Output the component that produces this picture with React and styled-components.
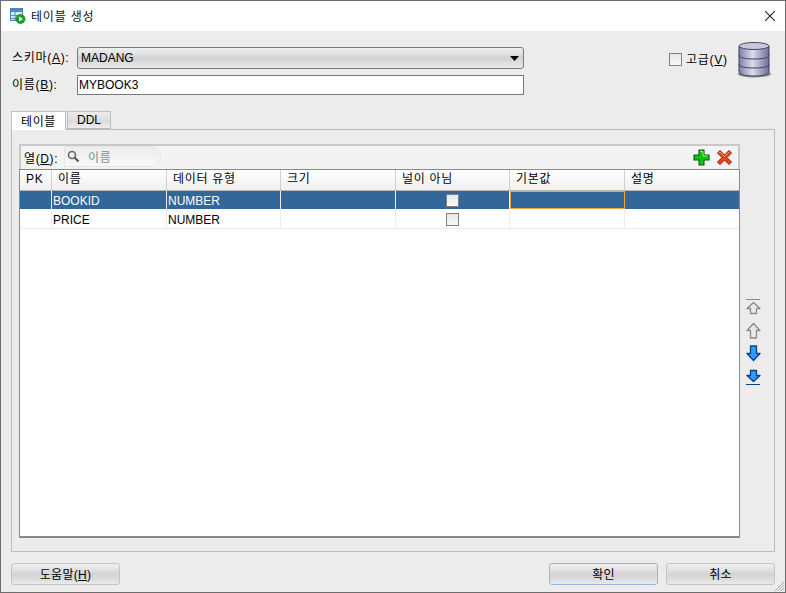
import styled, { createGlobalStyle } from 'styled-components';

const GlobalStyle = createGlobalStyle`
  html, body {
    margin: 0;
    padding: 0;
    background: #ececec;
  }
  * {
    box-sizing: border-box;
  }
`;

const columns = [
  { name: 'PK', width: 32 },
  { name: '이름', width: 115 },
  { name: '데이터 유형', width: 114 },
  { name: '크기', width: 115 },
  { name: '널이 아님', width: 114 },
  { name: '기본값', width: 115 },
  { name: '설명', width: 114 },
];

const rows = [
  { name: 'BOOKID', type: 'NUMBER', selected: true },
  { name: 'PRICE', type: 'NUMBER', selected: false },
];

const App = () => {
  return (
    <>
      <GlobalStyle />
      <Window>
        <TitleBar>
          <TitleIcon />
          <Title>테이블 생성</Title>
          <CloseIcon />
        </TitleBar>

        <Body>
          <Header>
            <Fields>
              <FieldRow>
                <FieldLabel>스키마(<u>A</u>):</FieldLabel>
                <Combo>
                  MADANG
                  <ComboArrow />
                </Combo>
              </FieldRow>
              <FieldRow $tight>
                <FieldLabel>이름(<u>B</u>):</FieldLabel>
                <TextInput>MYBOOK3</TextInput>
              </FieldRow>
            </Fields>
            <Advanced>
              <CheckBox />
              <AdvancedLabel>고급(<u>V</u>)</AdvancedLabel>
            </Advanced>
            <DatabaseIcon />
          </Header>

          <Tabs>
            <Tab $active>테이블</Tab>
            <Tab>DDL</Tab>
          </Tabs>

          <TabPanel>
            <PanelRow>
              <TableBox>
                <Toolbar>
                  <ToolbarLabel>열(<u>D</u>):</ToolbarLabel>
                  <SearchBox>
                    <SearchIcon />
                    <SearchText>이름</SearchText>
                  </SearchBox>
                  <ToolbarIcons>
                    <PlusIcon />
                    <CrossIcon />
                  </ToolbarIcons>
                </Toolbar>
                <Grid>
                  <HeaderRow>
                    {columns.map((col) => (
                      <HeaderCell key={col.name} $width={col.width}>{col.name}</HeaderCell>
                    ))}
                  </HeaderRow>
                  {rows.map((row) => (
                    <DataRow key={row.name} $selected={row.selected}>
                      <Cell $width={32} />
                      <Cell $width={115}>{row.name}</Cell>
                      <Cell $width={114}>{row.type}</Cell>
                      <Cell $width={115} />
                      <Cell $width={114} $center><SmallCheck /></Cell>
                      <Cell $width={115} $focused={row.selected} />
                      <Cell $width={114} />
                    </DataRow>
                  ))}
                </Grid>
              </TableBox>
              <MoveButtons>
                <MoveIcon $kind="gray" $bar="top" />
                <MoveIcon $kind="gray" />
                <MoveIcon $kind="blue" $down />
                <MoveIcon $kind="blue" $down $bar="bottom" />
              </MoveButtons>
            </PanelRow>
          </TabPanel>

          <Footer>
            <Button>도움말(<u>H</u>)</Button>
            <FooterRight>
              <Button $default>확인</Button>
              <Button>취소</Button>
            </FooterRight>
          </Footer>
        </Body>
        <ResizeGrip />
      </Window>
    </>
  );
};

// Icons
const TitleIcon = () => (
  <svg width="16" height="16" viewBox="0 0 16 16">
    <rect x="0.5" y="0.5" width="12" height="12" fill="#dfe9f5" stroke="#4f7fb5" />
    <rect x="1" y="1" width="11" height="3" fill="#4f86c6" />
    <path d="M1 7.5H12M1 10.5H12M5 4V12" stroke="#5f8dc0" />
    <circle cx="10.5" cy="11" r="4.6" fill="#1f9e2c" stroke="#0d7a1c" strokeWidth="0.6" />
    <path d="M9 8.4L13 11L9 13.6Z" fill="#fff" />
  </svg>
);

const CloseIcon = () => (
  <svg width="10" height="10" viewBox="0 0 10 10">
    <path d="M0 0L10 10M10 0L0 10" stroke="#222" strokeWidth="1.05" />
  </svg>
);

const ComboArrow = () => (
  <svg width="9" height="5" viewBox="0 0 9 5">
    <path d="M0 0H9L4.5 5Z" fill="#000" />
  </svg>
);

const DatabaseIcon = () => (
  <DbSvg width="36" height="38" viewBox="0 0 36 38">
    <defs>
      <linearGradient id="dbBody" x1="0" x2="1" y1="0" y2="0">
        <stop offset="0" stopColor="#7d7fa6" />
        <stop offset="0.45" stopColor="#dcdcec" />
        <stop offset="1" stopColor="#6d6f98" />
      </linearGradient>
    </defs>
    <ellipse cx="17.5" cy="33" rx="16.5" ry="3.5" fill="#8a8a8a" />
    <path d="M2 5V31C2 33.5 9 35 17 35S32 33.5 32 31V5Z" fill="url(#dbBody)" stroke="#3f4160" />
    <ellipse cx="17" cy="5" rx="15" ry="3.5" fill="#c7c8dc" stroke="#44466a" />
    <path d="M2 14C2 17 9 18 17 18S32 17 32 14M2 23C2 26 9 27 17 27S32 26 32 23" fill="none" stroke="#3f4160" />
  </DbSvg>
);

const SearchIcon = () => (
  <svg width="13" height="13" viewBox="0 0 13 13">
    <circle cx="5" cy="5" r="3.5" fill="none" stroke="#666" strokeWidth="1.6" />
    <path d="M7.8 7.8L11.5 11.5" stroke="#555" strokeWidth="2.2" />
  </svg>
);

const PlusIcon = () => (
  <svg width="17" height="17" viewBox="0 0 17 17">
    <path d="M6 1H11V6H16V11H11V16H6V11H1V6H6Z" fill="#12c212" stroke="#0a5c0a" strokeWidth="1.1" />
    <path d="M7 2.5H10V7H14.5" fill="none" stroke="#8cf08c" strokeWidth="1" />
  </svg>
);

const CrossIcon = () => (
  <svg width="17" height="17" viewBox="0 0 17 17">
    <path d="M1.5 4L4 1.5L8.5 6L13 1.5L15.5 4L11 8.5L15.5 13L13 15.5L8.5 11L4 15.5L1.5 13L6 8.5Z" fill="#f0401c" stroke="#8c1c08" strokeWidth="1" />
    <path d="M3 4L4 3L8.5 7.5L13 3" fill="none" stroke="#ffa080" strokeWidth="0.9" />
  </svg>
);

const MoveIcon = ({ $kind, $down, $bar }) => {
  const blue = $kind === 'blue';
  const fill = blue ? '#2f9bff' : '#e8e8e8';
  const stroke = blue ? '#0b3f8c' : '#8c8c8c';
  const arrow = $bar
    ? 'M7.5 3.5L14 9.5H10.5V14.5H4.5V9.5H1Z'
    : 'M7.5 1.5L14 8.5H10.5V16H4.5V8.5H1Z';
  return (
    <svg width="16" height="18" viewBox="0 0 16 18">
      {$bar === 'top' && <path d="M0 0.5H14" stroke={stroke} />}
      {$bar === 'bottom' && <path d="M0 17.5H14" stroke={stroke} />}
      <path
        d={arrow}
        fill={fill}
        stroke={stroke}
        strokeWidth="1.3"
        strokeLinejoin="round"
        transform={$down ? 'matrix(1 0 0 -1 0 18)' : undefined}
      />
    </svg>
  );
};

const ResizeGrip = () => (
  <GripSvg width="12" height="12" viewBox="0 0 12 12">
    <path d="M11 2L2 11M11 5L5 11M11 8L8 11" stroke="#a8a8a8" />
  </GripSvg>
);

// Styled Components
const Window = styled.div`
  position: relative;
  width: 786px;
  height: 593px;
  display: flex;
  flex-direction: column;
  border: 1px solid #6e6e6e;
  background: #ececec;
  color: #000;
  font-family: 'Liberation Sans', 'Noto Sans CJK KR', sans-serif;
  font-size: 12px;
  overflow: hidden;
`;

const TitleBar = styled.div`
  height: 30px;
  flex-shrink: 0;
  display: flex;
  align-items: center;
  padding: 0 10px 0 9px;
  background: #fff;
`;

const Title = styled.span`
  margin: 0 0 2px 5px;
  flex: 1;
  color: #111;
  letter-spacing: 0.8px;
`;

const Body = styled.div`
  flex: 1;
  display: flex;
  flex-direction: column;
  padding: 16px 10px 8px 10px;
`;

const Header = styled.div`
  display: flex;
  align-items: flex-start;
  height: 48px;
`;

const Fields = styled.div`
  width: 513px;
  display: flex;
  flex-direction: column;
`;

const FieldRow = styled.div`
  display: flex;
  align-items: center;
  margin-top: ${(p) => (p.$tight ? '6px' : '0')};
`;

const FieldLabel = styled.label`
  width: 66px;
  flex-shrink: 0;
  padding: 0 0 3px 1px;
  letter-spacing: 0.7px;
`;

const Combo = styled.div`
  flex: 1;
  height: 22px;
  display: flex;
  align-items: center;
  justify-content: space-between;
  padding: 0 4px 0 3px;
  border: 1px solid #7a7a7a;
  border-radius: 3px;
  background: linear-gradient(#f0f0f0 0%, #e4e4e4 25%, #d2d2d2 50%, #e0e0e0 80%, #ececec 100%);
`;

const TextInput = styled.div`
  flex: 1;
  height: 20px;
  display: flex;
  align-items: center;
  padding: 0 1px;
  border: 1px solid #7a7a7a;
  background: #fff;
`;

const Advanced = styled.div`
  margin-left: 145px;
  margin-top: 3px;
  display: flex;
  align-items: center;
  gap: 4px;
`;

const AdvancedLabel = styled.span`
  padding-bottom: 2px;
  letter-spacing: 0.7px;
`;

const CheckBox = styled.span`
  width: 13px;
  height: 13px;
  border: 1px solid #808080;
  background: linear-gradient(#e8e8e8, #f8f8f8);
`;

const DbSvg = styled.svg`
  margin-left: 9px;
  margin-top: -6px;
  flex-shrink: 0;
`;

const Tabs = styled.div`
  display: flex;
  margin-top: 16px;
  position: relative;
  z-index: 1;
`;

const Tab = styled.div`
  height: ${(p) => (p.$active ? '19px' : '18px')};
  width: ${(p) => (p.$active ? '55px' : '44px')};
  margin-bottom: ${(p) => (p.$active ? '-1px' : '0')};
  margin-left: ${(p) => (p.$active ? '0' : '1px')};
  padding-bottom: ${(p) => (p.$active ? '2px' : '0')};
  display: flex;
  align-items: center;
  justify-content: center;
  letter-spacing: ${(p) => (p.$active ? '0.6px' : '0')};
  border: 1px solid #c0c0c0;
  border-bottom: ${(p) => (p.$active ? 'none' : '1px solid #b8b8b8')};
  background: ${(p) => (p.$active ? '#fff' : 'linear-gradient(#ececec, #dcdcdc 60%, #ececec)')};
`;

const TabPanel = styled.div`
  height: 423px;
  padding: 14px 12px 13px 7px;
  border: 1px solid #bcbcbc;
  background: #ececec;
`;

const PanelRow = styled.div`
  height: 100%;
  display: flex;
`;

const TableBox = styled.div`
  width: 721px;
  display: flex;
  flex-direction: column;
  flex-shrink: 0;
`;

const Toolbar = styled.div`
  height: 25px;
  display: flex;
  align-items: center;
  padding: 0 5px 0 3px;
  border: 2px solid #c8c8c8;
  border-bottom: none;
  background: #f3f3f3;
`;

const ToolbarLabel = styled.span`
  flex-shrink: 0;
  letter-spacing: 0.6px;
`;

const SearchBox = styled.div`
  width: 97px;
  height: 21px;
  margin: -2px 0 0 6px;
  display: flex;
  align-items: center;
  gap: 8px;
  padding-left: 2px;
  border-radius: 0 10px 10px 0;
  background: linear-gradient(#ececec, #f8f8f8);
  border: 1px solid #e6e6e6;
`;

const SearchText = styled.span`
  color: #8a8a8a;
  letter-spacing: 0.7px;
`;

const ToolbarIcons = styled.div`
  margin-left: auto;
  display: flex;
  gap: 6px;
`;

const Grid = styled.div`
  flex: 1;
  border: 2px solid #8a8a8a;
  border-top-width: 1px;
  border-left-width: 1px;
  border-right-width: 1px;
  background: #fff;
`;

const HeaderRow = styled.div`
  height: 21px;
  display: flex;
  border-bottom: 1px solid #b8b8b8;
  background: linear-gradient(#ffffff, #f0f0f0);
`;

const HeaderCell = styled.div`
  width: ${(p) => p.$width}px;
  flex-shrink: 0;
  padding-left: 6px;
  line-height: 19px;
  letter-spacing: 0.7px;
  border-right: 1px solid #cfcfcf;
  &:last-child {
    border-right: none;
  }
`;

const DataRow = styled.div`
  height: 19px;
  display: flex;
  background: ${(p) => (p.$selected ? '#336699' : '#fff')};
  color: ${(p) => (p.$selected ? '#fff' : '#000')};
  border-bottom: 1px solid ${(p) => (p.$selected ? '#fff' : '#ececec')};
`;

const Cell = styled.div`
  width: ${(p) => p.$width}px;
  flex-shrink: 0;
  display: flex;
  align-items: center;
  justify-content: ${(p) => (p.$center ? 'center' : 'flex-start')};
  padding: ${(p) => (p.$center ? '0' : '1px 0 0 1px')};
  border-right: 1px solid #ececec;
  ${(p) => p.$focused && 'border: 1px solid #f0a830;'}
  &:last-child {
    border-right: none;
  }
`;

const SmallCheck = styled.span`
  width: 13px;
  height: 13px;
  border: 1px solid #808080;
  background: linear-gradient(#e8e8e8, #f8f8f8);
`;

const MoveButtons = styled.div`
  margin-left: 6px;
  margin-top: 155px;
  display: flex;
  flex-direction: column;
  gap: 4.5px;
`;

const Footer = styled.div`
  margin-top: 11px;
  display: flex;
  justify-content: space-between;
`;

const FooterRight = styled.div`
  display: flex;
  gap: 8px;
`;

const Button = styled.button`
  width: 109px;
  height: 22px;
  padding: 0 0 2px;
  color: #000;
  font: inherit;
  letter-spacing: 0.3px;
  border: 1px solid ${(p) => (p.$default ? '#8fb8e0' : '#c4c4c4')};
  border-radius: 3px;
  background: linear-gradient(#f0f0f0 0%, #e4e4e4 25%, #d4d4d4 50%, #dedede 80%, #ebebeb 100%);
`;

const GripSvg = styled.svg`
  position: absolute;
  right: 0;
  bottom: 0;
`;

export default App;
